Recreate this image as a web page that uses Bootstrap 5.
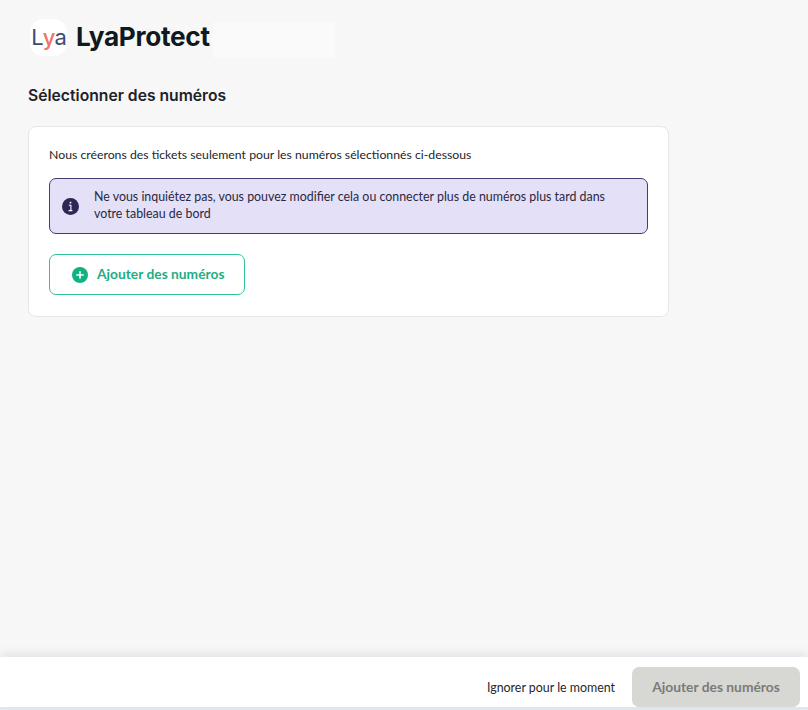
<!DOCTYPE html>
<html lang="fr">
<head>
<meta charset="utf-8">
<title>LyaProtect</title>
<link href="https://cdn.jsdelivr.net/npm/bootstrap@5.3.0/dist/css/bootstrap.min.css" rel="stylesheet">
<style>
html,body{height:710px;overflow:hidden}
body{background:#f7f7f7;font-family:Lato,"Noto Sans",sans-serif;color:#1b1f27}
.shell{height:710px}
.mainarea{padding:18px 28px 0;min-height:0}
.brandrow{height:38px;padding-left:2px}
.logobox{width:37px;height:37px;flex:none;background:#fff;border-radius:13px;font-family:Inter,sans-serif;font-size:22px;font-weight:400;letter-spacing:-1px;color:#3d4a73;line-height:1}
.logoy{color:#ee7466;font-weight:500}
.brandname{font-family:Inter,sans-serif;font-size:26.2px;font-weight:700;color:#101820;letter-spacing:-.3px;line-height:38px;width:137px;flex:none;margin-left:9px;white-space:nowrap}
.whitepatch{width:122px;height:36px;flex:none;background:#fafafa;margin-top:6px}
.pagehead{font-family:Inter,sans-serif;font-size:15.7px;font-weight:600;margin:30px 0 20px;line-height:20px;color:#1d2229}
.mainpanel{width:641px;height:191px;border:1px solid #e6e6e6;border-radius:8px;background:#fff;padding:20px}
.introtext{font-size:12.27px;line-height:16px;margin-bottom:15px;color:#22252b}
.infobox{background:#e3e0f8;border:1px solid #453c74;border-radius:7px;height:56px;padding:0 30px 2px 12px;gap:15px;font-size:12.4px;line-height:17px;color:#2a2840}
.infodot{width:17px;height:17px;flex:none;background:#2d2657;border-radius:50%;color:#fff;margin-top:2px}
.addbtn{width:196px;height:41px;margin-top:20px;background:#fff;border:1px solid #2fc39a;border-radius:7px;color:#1fae84;font-size:13.8px;font-weight:700;gap:9px;padding:0 0 0 22px;justify-content:flex-start}
.addbtn:hover{background:#fff;color:#1fae84;border-color:#2fc39a}
.plusdot{width:16px;height:16px;flex:none}
.footerbar{height:50px;background:#fff;box-shadow:0 -3px 10px rgba(0,0,0,.09);padding-right:8px;gap:17px;position:relative}
.skiplink{font-size:12.4px;color:#24282e;margin-top:22px}
.submitbtn{width:168px;height:40px;background:#d7d7d4;border:0;border-radius:7px;color:#7b7b78;font-size:13.8px;font-weight:700;margin-top:10px;padding:0}
.submitbtn:disabled{background:#d7d7d4;color:#7b7b78;opacity:1}
.bottomstrip{height:3px;background:#e2ebf2}
</style>
</head>
<body>
<div class="shell d-flex flex-column">
  <main class="mainarea flex-grow-1">
    <div class="brandrow d-flex align-items-center">
      <div class="logobox d-flex align-items-center justify-content-center"><span>L<span class="logoy">y</span>a</span></div>
      <div class="brandname">LyaProtect</div>
      <div class="whitepatch"></div>
    </div>
    <h1 class="pagehead">Sélectionner des numéros</h1>
    <section class="mainpanel">
      <p class="introtext">Nous créerons des tickets seulement pour les numéros sélectionnés ci-dessous</p>
      <div class="infobox d-flex align-items-center">
        <span class="infodot d-flex align-items-center justify-content-center">
          <svg width="9" height="11" viewBox="0 0 9 11" aria-hidden="true"><rect x="3.7" y="0.8" width="1.6" height="1.6" fill="#fff"/><path d="M2.8 4.3h2.1v5M2.6 9.6h3.8" fill="none" stroke="#fff" stroke-width="1.1"/></svg>
        </span>
        <span>Ne vous inquiétez pas, vous pouvez modifier cela ou connecter plus de numéros plus tard dans votre tableau de bord</span>
      </div>
      <button type="button" class="btn addbtn d-flex align-items-center">
        <svg class="plusdot" viewBox="0 0 16 16" aria-hidden="true"><circle cx="8" cy="8" r="8" fill="#10b182"/><path d="M8 4.3v7.4M4.3 8h7.4" stroke="#fff" stroke-width="1.5"/></svg>
        Ajouter des numéros
      </button>
    </section>
  </main>
  <footer class="footerbar d-flex justify-content-end align-items-start flex-shrink-0">
    <a class="skiplink text-decoration-none" href="#">Ignorer pour le moment</a>
    <button type="button" class="btn submitbtn" disabled>Ajouter des numéros</button>
  </footer>
  <div class="bottomstrip flex-shrink-0"></div>
</div>
<script src="https://cdn.jsdelivr.net/npm/bootstrap@5.3.0/dist/js/bootstrap.bundle.min.js"></script>
</body>
</html>
